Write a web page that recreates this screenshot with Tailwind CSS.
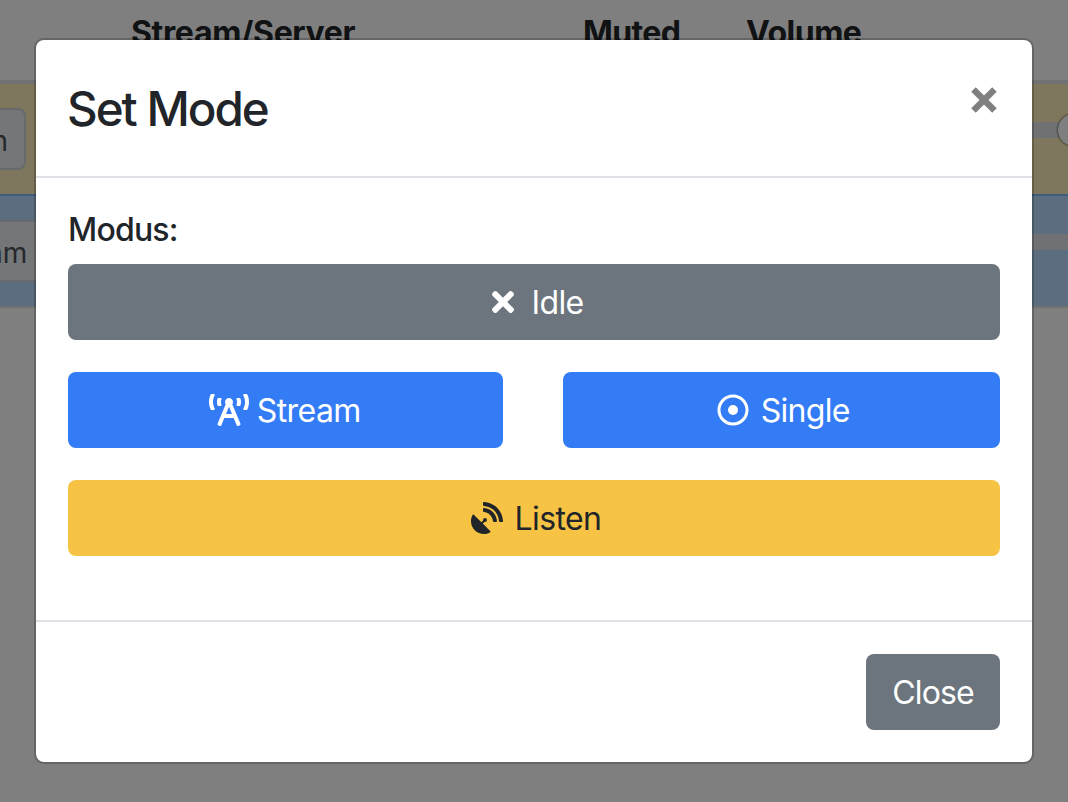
<!DOCTYPE html>
<html lang="en">
<head>
<meta charset="utf-8">
<title>Set Mode</title>
<script src="https://cdn.jsdelivr.net/npm/@tailwindcss/browser@4"></script>
</head>
<body class="relative h-[802px] w-[1068px] overflow-hidden bg-white font-['Inter',sans-serif] text-[32px] leading-[48px] text-[#212529]">
<!-- Page content behind the dialog -->
<main class="flex flex-col">
  <div class="flex h-20 pt-[9px] pl-[131px] font-bold">
    <span class="w-[452px]"><span class="tracking-[-0.35px]">Stream/Server</span></span>
    <span class="w-[163px]"><span class="tracking-[-0.6px]">Muted</span></span>
    <span class="tracking-[-0.5px]">Volume</span>
  </div>
  <div class="flex h-[114px] justify-between border-t-4 border-[#dee2e6] bg-[#ffeeba]">
    <div class="mt-6 flex h-[62px] w-[26px] items-center justify-end overflow-hidden rounded-r-lg border-2 border-l-0 border-[#ced4da] bg-[#e9ecef] pt-[3px] pr-4 text-[28px] text-[#495057]">n</div>
    <div class="mt-[38px] flex h-4 w-[60px] items-center bg-[#dee2e6] pl-[50px]"><div class="size-8 shrink-0 rounded-full bg-white shadow-[0_0_2px_1px_rgba(0,0,0,0.4)]"></div></div>
  </div>
  <div class="flex h-28 justify-between border-t-2 border-[#7abaff] bg-[#b8daff]">
    <div class="mt-6 flex h-[62px] w-[60px] items-center border-y-2 border-[#ced4da] bg-[#e9ecef] pt-[3px] text-[28px] text-[#495057]"><span class="-ml-[13px]">am</span></div>
    <div class="mt-[38px] h-4 w-[60px] bg-[#dee2e6]"></div>
  </div>
  <div class="h-0.5 bg-[#dee2e6]"></div>
</main>
<div class="absolute inset-0 bg-black/50"></div>

<!-- Dialog -->
<div class="absolute top-[38px] left-[34px] flex h-[726px] w-[1000px] flex-col rounded-[10px] border-2 border-black/20 bg-white bg-clip-padding">
  <header class="flex h-[138px] items-start justify-between border-b-2 border-[#dee2e6] px-8 pt-8">
    <h1 class="-ml-px pt-[1px] text-[47.5px] leading-[72px] font-[550] tracking-[-2px]">Set Mode</h1>
    <button class="mt-[15px] mr-[3px]" aria-label="Close">
      <svg class="size-[26px]" viewBox="0 0 26 26" fill="none" stroke="#808080" stroke-width="6.4"><path d="M2.5 2.5 23.5 23.5M23.5 2.5 2.5 23.5"/></svg>
    </button>
  </header>
  <section class="flex h-[442px] flex-col px-8 pt-[28px]">
    <label class="h-[58px] font-medium tracking-[-0.8px]">Modus:</label>
    <button class="flex h-[76px] shrink-0 items-center justify-center rounded-lg bg-[#6c757d] pl-2 text-white">
      <svg class="mr-[17px] h-8 w-[22px]" viewBox="0 0 352 512" fill="currentColor"><path d="M242.72 256l100.07-100.07c12.28-12.28 12.28-32.19 0-44.48l-22.24-22.24c-12.28-12.28-32.19-12.28-44.48 0L176 189.28 75.93 89.21c-12.28-12.28-32.19-12.28-44.48 0L9.21 111.45c-12.28 12.28-12.28 32.19 0 44.48L109.28 256 9.21 356.07c-12.28 12.28-12.28 32.19 0 44.48l22.24 22.24c12.28 12.28 32.2 12.28 44.48 0L176 322.72l100.07 100.07c12.28 12.28 32.2 12.28 44.48 0l22.24-22.24c12.28-12.28 12.28-32.19 0-44.48L242.72 256z"/></svg>
      <span class="pt-0.5 tracking-[-0.6px]">Idle</span>
    </button>
    <div class="mt-8 flex shrink-0 gap-[60px] text-white">
      <button class="flex h-[76px] flex-1 items-center justify-center rounded-lg bg-[#347cf6] pr-px">
        <svg class="mr-2 h-8 w-10" viewBox="0 0 640 512" fill="currentColor"><path d="M150.94 192h33.73c11.01 0 18.61-10.83 14.86-21.18-4.93-13.58-7.55-27.98-7.55-42.82s2.62-29.24 7.55-42.82C203.29 74.83 195.68 64 184.67 64h-33.73c-7.01 0-13.46 4.49-15.41 11.23C130.64 92.21 128 109.88 128 128c0 18.12 2.64 35.79 7.54 52.76 1.94 6.74 8.39 11.24 15.4 11.24zM89.92 23.34C95.56 12.72 87.97 0 75.96 0H40.63c-6.27 0-12.14 3.59-14.74 9.31C9.4 45.54 0 85.65 0 128c0 24.75 3.12 68.33 26.69 118.86 2.62 5.63 8.42 9.14 14.61 9.14h34.84c12.02 0 19.61-12.74 13.95-23.37-49.78-93.32-16.71-178.15-.17-209.29zM614.06 9.29C611.46 3.58 605.6 0 599.33 0h-35.42c-11.98 0-19.66 12.66-14.02 23.25 18.27 34.29 48.42 119.42.28 209.23-5.72 10.68 1.8 23.52 13.91 23.52h35.23c6.27 0 12.13-3.58 14.73-9.29C630.57 210.48 640 170.36 640 128s-9.42-82.48-25.94-118.71zM489.06 64h-33.73c-11.01 0-18.61 10.83-14.86 21.18 4.93 13.58 7.55 27.98 7.55 42.82s-2.62 29.24-7.55 42.82c-3.76 10.35 3.85 21.18 14.86 21.18h33.73c7.02 0 13.46-4.49 15.41-11.24 4.9-16.97 7.53-34.64 7.53-52.76 0-18.12-2.64-35.79-7.54-52.76-1.94-6.75-8.39-11.24-15.4-11.24zm-116.3 100.12c7.05-10.29 11.2-22.71 11.2-36.12 0-35.35-28.63-64-63.96-64-35.32 0-63.96 28.65-63.96 64 0 13.41 4.15 25.83 11.2 36.12l-130.5 313.41c-3.4 8.15.46 17.52 8.61 20.92l29.51 12.31c8.15 3.4 17.52-.46 20.91-8.61L244.96 384h150.07l49.2 118.15c3.4 8.16 12.76 12.01 20.91 8.61l29.51-12.31c8.15-3.4 12-12.77 8.61-20.92l-130.5-313.41zM271.62 320L320 203.81 368.38 320h-96.76z"/></svg>
        <span class="pt-0.5 tracking-[-0.6px]">Stream</span>
      </button>
      <button class="flex h-[76px] flex-1 items-center justify-center rounded-lg bg-[#347cf6] pl-1">
        <svg class="mr-3 size-8" viewBox="0 0 32 32"><circle cx="16" cy="16" r="14" fill="none" stroke="currentColor" stroke-width="3"/><circle cx="16" cy="16" r="5" fill="currentColor"/></svg>
        <span class="pt-0.5 tracking-[-0.7px]">Single</span>
      </button>
    </div>
    <button class="mt-8 flex h-[76px] shrink-0 items-center justify-center rounded-lg bg-[#f6c344] pl-1">
      <svg class="mr-3 size-8" viewBox="0 0 512 512" fill="currentColor"><path d="M305.45 462.59c7.39 7.3 6.19 20.1-3 25-77.71 41.8-176.73 29.91-242.34-35.7C-5.5 386.28-17.4 287.36 24.41 209.55c4.89-9.09 17.69-10.3 25-3L166.23 323.37l27.39-27.4c-.68-2.6-1.59-5-1.59-7.81a32 32 0 1 1 32 32c-2.79 0-5.2-.89-7.79-1.59l-27.41 27.41zM511.98 303.07a16.1 16.1 0 0 1-16 17h-32.12a15.97 15.97 0 0 1-15.89-15C440.47 175.55 336.45 70.53 207.03 63.53a15.84 15.84 0 0 1-15-15.9v-31.6a16.09 16.09 0 0 1 17-16C372.25 8.62 503.47 139.84 511.98 303.07zm-96.02-.3a16.21 16.21 0 0 1-16.11 17.3h-32.2a16.07 16.07 0 0 1-15.9-14.7c-6.9-77.02-68.11-138.92-144.92-145.23a15.94 15.94 0 0 1-14.8-15.9v-32.1a16.13 16.13 0 0 1 17.3-16.1c110.12 8.5 198.23 96.6 206.63 206.73z"/></svg>
      <span class="pt-0.5 tracking-[-0.6px]">Listen</span>
    </button>
  </section>
  <footer class="flex flex-1 items-start justify-end border-t-2 border-[#dee2e6] px-8 pt-8">
    <button class="flex h-[76px] w-[134px] items-center justify-center rounded-lg bg-[#6c757d] text-white"><span class="pt-0.5 tracking-[-0.9px]">Close</span></button>
  </footer>
</div>
</body>
</html>
